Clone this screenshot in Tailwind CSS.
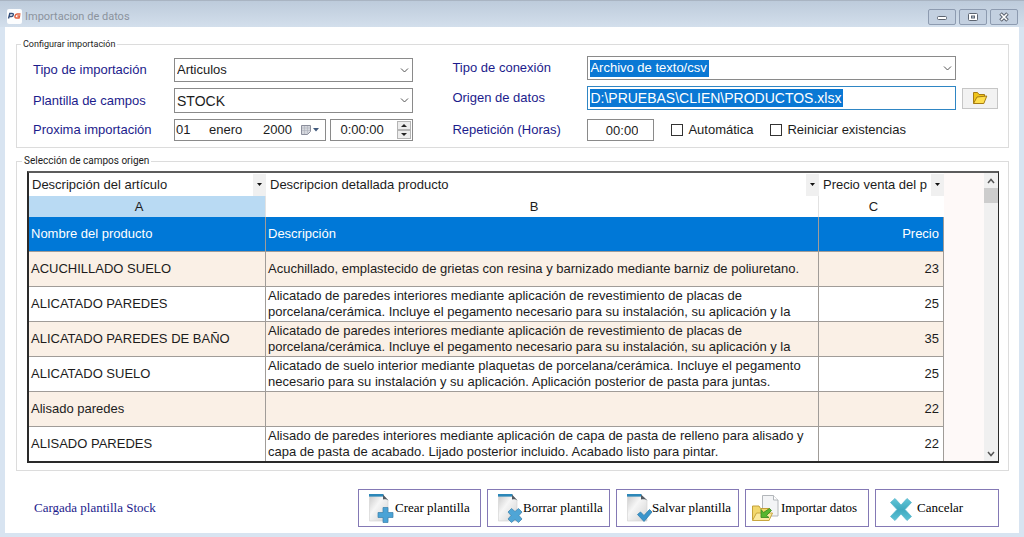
<!DOCTYPE html>
<html lang="es">
<head>
    <meta charset="UTF-8">
    <meta name="viewport" content="width=device-width, initial-scale=1.0">
    <title>Importacion de datos</title>
    <script src="https://cdn.jsdelivr.net/npm/@tailwindcss/browser@4"></script>
</head>
<body class="min-h-screen flex flex-col bg-[#d8e4f1] font-['Liberation_Sans',Arial,sans-serif] text-[13px] leading-4 text-[#1c1c1c]">
    <!-- Title bar -->
    <header class="flex items-center h-[27px] pl-[7px] pr-[6px] pt-[5px] border-t border-[#a9b4c2] bg-linear-to-b from-[#bdcbdb] to-[#d3dfec]">
        <svg class="w-[15px] h-[15px]" viewBox="0 0 15 15">
            <rect width="15" height="15" rx="2" fill="#fcfdfe"/>
            <path d="M1.500 9.500l1.300-5H5q1.600 0 1.300 1.400Q6 7.500 4.400 7.500H2.500" fill="none" stroke="#35507c" stroke-width="1.400"/>
            <path d="M13.500 5H10Q8.500 5 8 7.200 7.700 9 9.200 9h2.800l.5-1.900h-2.200" fill="none" stroke="#e0603f" stroke-width="1.500"/>
        </svg>
        <h1 class="flex-1 ml-[3px] font-[Roboto,sans-serif] text-[11px] text-[#8b939d]">Importacion de datos</h1>
        <div class="flex gap-[3px]">
            <button aria-label="Minimizar" class="w-7 h-4 flex items-center justify-center border border-[#8d9bb0] rounded-xs bg-[#c3d0e0]">
                <svg width="12" height="10" viewBox="0 0 12 10"><rect x="1.500" y="4.500" width="9" height="3" rx="1" fill="#fff" stroke="#5c6470"/></svg>
            </button>
            <button aria-label="Maximizar" class="w-7 h-4 flex items-center justify-center border border-[#8d9bb0] rounded-xs bg-[#c3d0e0]">
                <svg width="12" height="10" viewBox="0 0 12 10"><rect x="1.500" y="1.500" width="9" height="7" rx="1" fill="#fff" stroke="#5c6470"/><rect x="4.500" y="4" width="3" height="2" fill="#c3d0e0" stroke="#5c6470"/></svg>
            </button>
            <button aria-label="Cerrar" class="w-7 h-4 flex items-center justify-center border border-[#8d9bb0] rounded-xs bg-[#c3d0e0]">
                <svg width="12" height="10" viewBox="0 0 12 10"><path d="M2.500 1.500L9.500 8.500M9.500 1.500L2.500 8.500" stroke="#5c6470" stroke-width="3.600"/><path d="M3 2L9 8M9 2L3 8" stroke="#fff" stroke-width="1.600"/></svg>
            </button>
        </div>
    </header>

    <main class="flex-1 flex flex-col bg-white mx-[5px] mb-1 pl-[11px] pr-[10px] pt-[9px]">
        <!-- Import settings -->
        <fieldset class="border border-[#dcdcdc] pl-4 pr-[10px] pb-[6px] h-[112px]">
            <legend class="-ml-3 px-[2px] font-[Roboto,sans-serif] text-[9px] leading-4">Configurar importación</legend>
            <div class="grid grid-cols-[380fr_545fr] gap-x-[39px]">
                <div class="flex flex-col gap-[6px] pt-[6px]">
                    <div class="flex items-center">
                        <label for="tipo" class="w-[141px] text-[#1c1c8c]">Tipo de importación</label>
                        <div class="relative flex-1">
                            <select id="tipo" class="block appearance-none w-full h-6 pl-[2px] border border-[#8a8a8a] bg-white"><option>Articulos</option></select>
                            <svg class="absolute right-1 top-2 pointer-events-none" width="9" height="9" viewBox="0 0 9 9"><path d="M1 2.500L4.500 6 8 2.500" fill="none" stroke="#555"/></svg>
                        </div>
                    </div>
                    <div class="flex items-center">
                        <label for="plantilla" class="w-[141px] text-[#1c1c8c]">Plantilla de campos</label>
                        <div class="relative flex-1">
                            <select id="plantilla" class="block appearance-none w-full h-[25px] pl-[2px] border border-[#8a8a8a] bg-white text-[14px]"><option>STOCK</option></select>
                            <svg class="absolute right-1 top-2 pointer-events-none" width="9" height="9" viewBox="0 0 9 9"><path d="M1 2.500L4.500 6 8 2.500" fill="none" stroke="#555"/></svg>
                        </div>
                    </div>
                    <div class="flex items-center">
                        <label for="dia" class="w-[141px] text-[#1c1c8c]">Proxima importación</label>
                        <div class="flex-1 flex items-center h-[22px] border border-[#8a8a8a] pl-px pr-[5px]">
                            <input id="dia" value="01" class="w-[33px]">
                            <input aria-label="Mes" value="enero" class="w-[54px]">
                            <input aria-label="Año" value="2000" class="w-9">
                            <button aria-label="Abrir calendario" class="ml-auto">
                                <svg width="20" height="12" viewBox="0 0 20 12"><path d="M1.500 1.500h9v6l-3 3h-6z" fill="#d5d7dd" stroke="#8c8f9c"/><path d="M2 4h8M2 6.500h8M4.500 2v8M7.500 2v8" stroke="#aeb1bc" stroke-width=".6"/><path d="M13 4h6l-3 3.500z" fill="#41597c"/></svg>
                            </button>
                        </div>
                        <div class="flex items-center justify-between w-[83px] h-[22px] ml-1 border border-[#8a8a8a] pl-[9px] pr-px">
                            <input aria-label="Hora" value="0:00:00" class="w-[52px]">
                            <div class="flex flex-col">
                                <button aria-label="Subir hora" class="w-[14px] h-[9px] flex items-center justify-center border border-[#b4b4b4] bg-[#ececec]"><svg width="6" height="3" viewBox="0 0 6 3"><path d="M0 3h6L3 0z" fill="#222"/></svg></button>
                                <button aria-label="Bajar hora" class="w-[14px] h-[9px] flex items-center justify-center border border-[#b4b4b4] bg-[#ececec]"><svg width="6" height="3" viewBox="0 0 6 3"><path d="M0 0h6L3 3z" fill="#222"/></svg></button>
                            </div>
                        </div>
                    </div>
                </div>

                <div class="flex flex-col gap-[6px] pt-1">
                    <div class="flex items-center">
                        <label for="conexion" class="w-[135px] text-[#1c1c8c]">Tipo de conexión</label>
                        <div class="relative flex-1 mr-[42px]">
                            <select id="conexion" class="block appearance-none w-full h-6 pl-[2px] border border-[#8a8a8a] text-white bg-[linear-gradient(#0a78d4,#0a78d4)] bg-[length:119px_17px] bg-[position:2px_3px] bg-no-repeat"><option>Archivo de texto/csv</option></select>
                            <svg class="absolute right-1 top-2 pointer-events-none" width="9" height="9" viewBox="0 0 9 9"><path d="M1 2.500L4.500 6 8 2.500" fill="none" stroke="#555"/></svg>
                        </div>
                    </div>
                    <div class="flex items-center">
                        <label for="origen" class="w-[135px] text-[#1c1c8c]">Origen de datos</label>
                        <input id="origen" value="D:\PRUEBAS\CLIEN\PRODUCTOS.xlsx" class="flex-1 min-w-0 h-6 pl-[2px] border border-[#2f86c4] text-[14px] text-white bg-[linear-gradient(#0a78d4,#0a78d4)] bg-[length:253px_18px] bg-[position:2px_2px] bg-no-repeat">
                        <button aria-label="Buscar archivo" class="w-9 h-[21px] ml-[6px] flex items-center justify-center border border-[#c6c6c6] bg-[#f2f2f2]">
                            <svg width="16" height="14" viewBox="0 0 16 14"><path d="M1.500 12.500v-11h4l1.500 2h5.500v3" fill="#f0c419" stroke="#a67c14"/><path d="M1.500 12.500L5 6l9.800-1-3 7.500z" fill="#ffdf4e" stroke="#a67c14"/></svg>
                        </button>
                    </div>
                    <div class="flex items-center pt-[3px]">
                        <label for="horas" class="w-[135px] text-[#1c1c8c]">Repetición (Horas)</label>
                        <input id="horas" value="00:00" class="w-[67px] h-[22px] pr-[15px] border border-[#8a8a8a] text-right">
                        <label class="flex items-center ml-[17px]"><input type="checkbox" class="appearance-none w-3 h-3 mr-[5px] border border-[#333]">Automática</label>
                        <label class="flex items-center ml-[17px]"><input type="checkbox" class="appearance-none w-3 h-3 mr-[5px] border border-[#333]">Reiniciar existencias</label>
                    </div>
                </div>
            </div>
        </fieldset>

        <!-- Source fields -->
        <fieldset class="mt-[5px] border border-[#dcdcdc] pl-[10px] pr-[9px] pb-[7px]">
            <legend class="-ml-[5px] px-[2px] font-[Roboto,sans-serif] text-[10px] leading-4">Selección de campos origen</legend>
            <div class="flex mt-[2px] border-2 border-r border-[#2a2a2a] border-t-[#5c5c5c] bg-[#fef9f8]">
                <table class="flex-1 table-fixed border-separate border-spacing-0 bg-white">
                    <colgroup>
                        <col class="w-[237px]">
                        <col>
                        <col class="w-[125px]">
                    </colgroup>
                    <thead>
                        <tr class="h-[23px]">
                            <th class="p-0 font-normal">
                                <div class="relative">
                                    <select aria-label="Campo columna A" class="block appearance-none w-full h-[22px] pl-[3px]"><option>Descripción del artículo</option></select>
                                    <span class="absolute right-0 top-0 w-[13px] h-[22px] flex items-center justify-center bg-[#f0f0f0] pointer-events-none"><svg width="5" height="3" viewBox="0 0 5 3"><path d="M0 0h5L2.500 3z" fill="#111"/></svg></span>
                                </div>
                            </th>
                            <th class="p-0 font-normal">
                                <div class="relative">
                                    <select aria-label="Campo columna B" class="block appearance-none w-full h-[22px] pl-1"><option>Descripcion detallada producto</option></select>
                                    <span class="absolute right-0 top-0 w-[13px] h-[22px] flex items-center justify-center bg-[#f0f0f0] pointer-events-none"><svg width="5" height="3" viewBox="0 0 5 3"><path d="M0 0h5L2.500 3z" fill="#111"/></svg></span>
                                </div>
                            </th>
                            <th class="p-0 font-normal">
                                <div class="relative">
                                    <select aria-label="Campo columna C" class="block appearance-none w-full h-[22px] pl-1 pr-[17px]"><option>Precio venta del público</option></select>
                                    <span class="absolute right-0 top-0 w-[13px] h-[22px] flex items-center justify-center bg-[#f0f0f0] pointer-events-none"><svg width="5" height="3" viewBox="0 0 5 3"><path d="M0 0h5L2.500 3z" fill="#111"/></svg></span>
                                </div>
                            </th>
                        </tr>
                        <tr class="h-[21px]">
                            <th class="p-0 pr-4 font-normal bg-[#b9daf3] border-r border-[#e2e2e2]">A</th>
                            <th class="p-0 pr-4 font-normal border-r border-[#e2e2e2]">B</th>
                            <th class="p-0 pr-4 font-normal">C</th>
                        </tr>
                    </thead>
                    <tbody class="[&_td]:h-[35px] [&_td]:py-0 [&_td]:px-[2px] [&_td]:border-r [&_td]:border-b [&_td]:border-[#a09c98] [&_td:last-child]:text-right [&_td:last-child]:pr-1 [&_tr:last-child_td]:h-[34px] [&_tr:last-child_td]:border-b-0">
                        <tr class="bg-[#0078d7] text-white">
                            <td>Nombre del producto</td>
                            <td>Descripción</td>
                            <td>Precio</td>
                        </tr>
                        <tr class="bg-[#faf0e6]">
                            <td>ACUCHILLADO SUELO</td>
                            <td>Acuchillado, emplastecido de grietas con resina y barnizado mediante barniz de poliuretano.</td>
                            <td>23</td>
                        </tr>
                        <tr>
                            <td>ALICATADO PAREDES</td>
                            <td>Alicatado de paredes interiores mediante aplicación de revestimiento de placas de<br>porcelana/cerámica. Incluye el pegamento necesario para su instalación, su aplicación y la</td>
                            <td>25</td>
                        </tr>
                        <tr class="bg-[#faf0e6]">
                            <td>ALICATADO PAREDES DE BAÑO</td>
                            <td>Alicatado de paredes interiores mediante aplicación de revestimiento de placas de<br>porcelana/cerámica. Incluye el pegamento necesario para su instalación, su aplicación y la</td>
                            <td>35</td>
                        </tr>
                        <tr>
                            <td>ALICATADO SUELO</td>
                            <td>Alicatado de suelo interior mediante plaquetas de porcelana/cerámica. Incluye el pegamento<br>necesario para su instalación y su aplicación. Aplicación posterior de pasta para juntas.</td>
                            <td>25</td>
                        </tr>
                        <tr class="bg-[#faf0e6]">
                            <td>Alisado paredes</td>
                            <td></td>
                            <td>22</td>
                        </tr>
                        <tr>
                            <td>ALISADO PAREDES</td>
                            <td>Alisado de paredes interiores mediante aplicación de capa de pasta de relleno para alisado y<br>capa de pasta de acabado. Lijado posterior incluido. Acabado listo para pintar.</td>
                            <td>22</td>
                        </tr>
                    </tbody>
                </table>
                <!-- Scrollbar -->
                <div class="ml-10 w-[14px] flex flex-col bg-[#f0f0f0]">
                    <button aria-label="Subir" class="h-[15px] flex items-center justify-center"><svg width="8" height="6" viewBox="0 0 8 6"><path d="M1 5l3-3.500L7 5" fill="none" stroke="#555" stroke-width="1.500"/></svg></button>
                    <div class="h-[15px] bg-[#cdcdcd]"></div>
                    <button aria-label="Bajar" class="mt-auto h-[15px] flex items-center justify-center"><svg width="8" height="6" viewBox="0 0 8 6"><path d="M1 1l3 3.500L7 1" fill="none" stroke="#555" stroke-width="1.500"/></svg></button>
                </div>
            </div>
        </fieldset>

        <!-- Actions -->
        <footer class="flex items-center justify-between mt-[18px] pb-[6px] pl-[18px] pr-[10px] font-['Liberation_Serif','Times_New_Roman',serif]">
            <p class="text-[#1c1c8c]">Cargada plantilla Stock</p>
            <div class="flex gap-[6px] text-black">
                <button class="w-[123px] h-[38px] flex items-center pl-[9px] border border-[#8479b5] bg-white">
                    <svg width="27" height="30" viewBox="0 0 27 30">
                        <defs>
                            <linearGradient id="paper" x1="0" y1="0" x2="1" y2="1">
                                <stop offset="0" stop-color="#c9c9c9"/><stop offset=".4" stop-color="#f6f6f6"/><stop offset="1" stop-color="#d2d2d2"/>
                            </linearGradient>
                        </defs>
                        <path d="M1.500 2H15l5 5v21H1.500z" fill="url(#paper)" stroke="#d6d6d6" stroke-width=".7"/>
                        <path d="M1 1h14.500v2.600H1z" fill="#2c87b8"/><path d="M15 1.500l5.500 6c-2-1.500-3.500-1.500-5.500-1z" fill="#545c63"/>
                        <path d="M15 14.500h5v5h5v5h-5v5h-5v-5h-5v-5h5z" fill="#4aa3d6" stroke="#3a80aa" stroke-width=".7"/>
                    </svg>
                    Crear plantilla
                </button>
                <button class="w-[123px] h-[38px] flex items-center pl-[9px] border border-[#8479b5] bg-white">
                    <svg width="26" height="30" viewBox="0 0 26 30">
                        <path d="M1.500 2H15l5 5v21H1.500z" fill="url(#paper)" stroke="#d6d6d6" stroke-width=".7"/>
                        <path d="M1 1h14.500v2.600H1z" fill="#2c87b8"/><path d="M15 1.500l5.500 6c-2-1.500-3.500-1.500-5.500-1z" fill="#545c63"/>
                        <path d="M14.500 15.500l3.500 3 3.500-3 3.500 3.500-3 3.500 3 3.500-3.500 3.500-3.500-3-3.500 3-3.500-3.500 3-3.500-3-3.500z" fill="#4fa5d6" stroke="#3a80aa" stroke-width=".7"/>
                    </svg>
                    Borrar plantilla
                </button>
                <button class="w-[123px] h-[38px] flex items-center pl-[9px] border border-[#8479b5] bg-white">
                    <svg width="26" height="30" viewBox="0 0 26 30">
                        <path d="M1.500 2H15l6 5v21H1.500z" fill="url(#paper)" stroke="#d6d6d6" stroke-width=".7"/>
                        <path d="M1 1h14.500v2.600H1z" fill="#2c87b8"/><path d="M15 1.500l6.500 6c-2-1.500-4.500-1.500-6.500-1z" fill="#545c63"/>
                        <path d="M11.500 21.500l3-2.500 3.500 3.500 5.500-6 2.500 2.500-8 9.500z" fill="#3a95cc" stroke="#2d7dad" stroke-width=".8"/>
                    </svg>
                    Salvar plantilla
                </button>
                <button class="w-[124px] h-[38px] flex items-center pl-[5px] border border-[#8479b5] bg-white">
                    <svg class="mr-[2px]" width="28" height="30" viewBox="0 0 28 30">
                        <path d="M11.500 2.500h11l4.500 4.500v16H11.500z" fill="#f3f4f6" stroke="#b2b6ba"/><path d="M22.500 2.500V7H27" fill="#fff" stroke="#b2b6ba"/>
                        <path d="M1.500 27V13H8l1.500 2.500h9V27z" fill="#f2d76c" stroke="#c4a13a"/><path d="M1.500 27.500l4-7.500h16L18 27.500z" fill="#fbeaa0" stroke="#c9a73f"/>
                        <path d="M18.500 15.500l2 2-5 5 2.500 2H10v-8l2.500 3z" fill="#57b62f" stroke="#37851c" stroke-width=".8"/>
                    </svg>
                    Importar datos
                </button>
                <button class="w-[124px] h-[38px] flex items-center pl-[14px] border border-[#8479b5] bg-white">
                    <svg class="mr-[5px] mt-[2px]" width="22" height="23" viewBox="0 0 22 23">
                        <defs>
                            <linearGradient id="teal" x1="0" y1="0" x2="0" y2="1">
                                <stop offset="0" stop-color="#62c6d8"/><stop offset=".5" stop-color="#3fa9bf"/><stop offset="1" stop-color="#5cc2d6"/>
                            </linearGradient>
                        </defs>
                        <path d="M5 .5l6 6.500 6-6.500 4.500 4-6.500 7 6.500 7-4.500 4-6-6.500-6 6.500L.5 18.500l6.500-7-6.500-7z" fill="url(#teal)" stroke="#5bb8cb" stroke-width=".8"/>
                    </svg>
                    Cancelar
                </button>
            </div>
        </footer>
    </main>
</body>
</html>
